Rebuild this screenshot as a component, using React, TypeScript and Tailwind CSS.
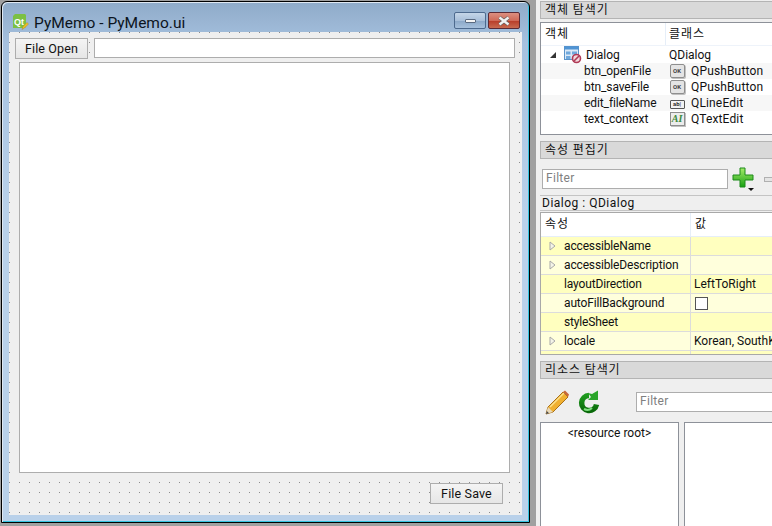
const font = "font-['Roboto','Noto_Sans_CJK_KR',sans-serif]";

function QtIcon() {
  return (
    <svg width="16" height="16" viewBox="0 0 16 16" className="mt-[2px] shrink-0">
      <path d="M2 0h10l1 1v12l-2 1H0V2z" fill="#7cc043" />
      <text x="1" y="10.500" fontSize="9" fontWeight="700" fill="#fff" fontFamily="Liberation Sans">Qt</text>
      <path d="M9 15.500l1-3 4-4 1.500 1.500-4 4z" fill="#f0c020" stroke="#a08020" strokeWidth="0.4" />
    </svg>
  );
}

function WindowButtons() {
  return (
    <div className="flex gap-[2px] mr-[9px]">
      <div className="w-[32px] h-[17px] rounded-[2px] border border-[#4d6a8e] bg-[linear-gradient(#c5d6e8,#a9c0da_50%,#8ba8c8_52%,#a6c0dc)] flex items-center justify-center">
        <div className="w-[11px] h-[4px] bg-[#f4f4f4] border border-[#5a6a80] rounded-[1px]" />
      </div>
      <div className="w-[32px] h-[17px] rounded-[2px] border border-[#5a2a36] bg-[linear-gradient(#dc8f80,#cf6a58_50%,#b83c28_52%,#c86a50)] flex items-center justify-center">
        <svg width="14" height="10" viewBox="0 0 14 10">
          <path d="M2.500 1.500l9 7M11.500 1.500l-9 7" stroke="#5f5f5f" strokeWidth="3.600" />
          <path d="M2.500 1.500l9 7M11.500 1.500l-9 7" stroke="#f2f2f2" strokeWidth="2.400" />
        </svg>
      </div>
    </div>
  );
}

function QtButton({ label }: { label: string }) {
  return (
    <button className="w-[73px] h-[21px] border border-[#adadad] bg-[linear-gradient(#f4f4f4,#e6e6e6)] text-[12.5px] leading-[20px] text-[#111] tracking-[0.15px]">
      {label}
    </button>
  );
}

function DesignerWindow() {
  return (
    <div className="w-[529px] h-[522px] ml-[1px] mt-[1px] border border-black rounded-t-[6px] bg-[linear-gradient(#8fabc9,#a6c1df_8%,#b9d1ea_40%)] shadow-[inset_1px_1px_0_#dfe8f2,inset_-1px_-1px_0_#35c4e0] flex flex-col">
      <div className="h-[30px] flex items-start justify-between pt-[10px] shrink-0">
        <div className="flex items-start gap-[5px] pl-[11px]">
          <QtIcon />
          <span className="text-[15.5px] leading-[22px] text-[#0c1420]">PyMemo - PyMemo.ui</span>
        </div>
        <WindowButtons />
      </div>
      <div className="w-[513px] h-[483px] ml-[7px] bg-[#efefef] bg-[radial-gradient(circle_at_0.5px_0.5px,#8c8c8c_0.6px,transparent_0.8px)] bg-[length:10px_10px] pt-[6px] flex flex-col">
        <div className="flex gap-[6px] pl-[6px]">
          <QtButton label="File Open" />
          <div className="w-[421px] h-[20px] bg-white border border-[#adadad]" />
        </div>
        <div className="w-[491px] h-[411px] ml-[10px] mt-[3px] bg-white border border-[#adadad]" />
        <div className="flex justify-end pr-[19px] mt-[10px]">
          <QtButton label="File Save" />
        </div>
      </div>
    </div>
  );
}

function PanelHeading({ title }: { title: string }) {
  return (
    <div className="h-[18px] bg-[#d9d9d9] border border-r-0 border-[#b4b4b4] pl-[4px] text-[12px] leading-[17px] text-[#111] tracking-[0.9px]">
      {title}
    </div>
  );
}

function DialogIcon() {
  return (
    <svg width="18" height="18" viewBox="0 0 18 18" className="shrink-0">
      <rect x="0.500" y="0.500" width="14" height="13" fill="#dbe9f7" stroke="#5b93c9" />
      <rect x="0.500" y="0.500" width="14" height="3" fill="#4f94d4" />
      <rect x="2" y="5.500" width="4.500" height="3" fill="#6fa8dc" />
      <rect x="8" y="5.500" width="5" height="3" fill="#6fa8dc" />
      <rect x="2" y="10" width="4.500" height="3" fill="#6fa8dc" />
      <circle cx="12.500" cy="12.500" r="4" fill="#f0d8dc" stroke="#b03a56" strokeWidth="1.600" />
      <path d="M10 15l5-5" stroke="#b03a56" strokeWidth="1.600" />
    </svg>
  );
}

function OkIcon() {
  return (
    <div className="w-[15px] h-[14px] bg-[#e4e4e4] border border-[#8e8e8e] rounded-[2px] shadow-[1px_1px_0_#c0c0c0] flex items-center justify-center text-[6px] leading-none font-bold text-[#444]">
      OK
    </div>
  );
}

function LineEditIcon() {
  return (
    <div className="w-[15px] h-[9px] mt-[2px] bg-[#f2f2f2] border border-[#555] rounded-[1px] flex items-center justify-center text-[6px] leading-none font-bold text-[#333]">
      ab|
    </div>
  );
}

function TextEditIcon() {
  return (
    <div className="w-[15px] h-[14px] bg-[#ececec] border border-[#8e8e8e] shadow-[1px_1px_0_#c0c0c0] flex items-center justify-center text-[10px] leading-none italic font-bold text-[#3c8a3c] font-['Liberation_Serif',serif]">
      AI
    </div>
  );
}

const objectRows = [
  { name: "btn_openFile", cls: "QPushButton", icon: <OkIcon />, tint: true },
  { name: "btn_saveFile", cls: "QPushButton", icon: <OkIcon />, tint: false },
  { name: "edit_fileName", cls: "QLineEdit", icon: <LineEditIcon />, tint: true },
  { name: "text_context", cls: "QTextEdit", icon: <TextEditIcon />, tint: false },
];

function ObjectInspector() {
  return (
    <div className="h-[113px] mt-[3px] bg-white border border-r-0 border-[#8d9199] text-[12px] text-[#111] overflow-hidden">
      <div className="h-[23px] flex leading-[22px] border-b border-[#eef3fa]">
        <div className="w-[125px] pl-[4px] border-r border-[#e6eef8] tracking-[1px]">객체</div>
        <div className="pl-[3px] tracking-[1px]">클래스</div>
      </div>
      <div className="h-[17px] flex items-center">
        <div className="w-[125px] flex items-center shrink-0">
          <span className="ml-[9px] w-0 h-0 border-l-[6px] border-l-transparent border-b-[6px] border-b-[#333]" />
          <span className="ml-[8px]"><DialogIcon /></span>
          <span className="ml-[4px]">Dialog</span>
        </div>
        <span className="ml-[3px]">QDialog</span>
      </div>
      {objectRows.map((row) => (
        <div key={row.name} className={`h-[16px] flex items-center ${row.tint ? "bg-[#f7f7f7]" : "bg-white"}`}>
          <div className="w-[125px] pl-[43px] shrink-0 whitespace-nowrap tracking-[-0.1px]">{row.name}</div>
          <div className="w-[16px] ml-[3px] flex justify-center shrink-0">{row.icon}</div>
          <span className="ml-[6px] tracking-[0.15px]">{row.cls}</span>
        </div>
      ))}
    </div>
  );
}

function FilterBox({ width }: { width: string }) {
  return (
    <div className={`${width} h-[20px] bg-white border border-[#adadad] pl-[3px] text-[12px] leading-[17px] text-[#808080] tracking-[0.3px] shrink-0`}>
      Filter
    </div>
  );
}

function PlusIcon() {
  return (
    <svg width="23" height="24" viewBox="0 0 23 24" className="shrink-0">
      <defs>
        <linearGradient id="plusFill" x1="0" y1="0" x2="0" y2="1">
          <stop offset="0" stopColor="#a5ec6a" />
          <stop offset="1" stopColor="#17a012" />
        </linearGradient>
      </defs>
      <path d="M8 1h5v7h8v5h-8v7H8v-7H1V8h7z" fill="url(#plusFill)" stroke="#1d8a1a" strokeWidth="1" />
      <path d="M16 21h6l-3 3z" fill="#111" />
    </svg>
  );
}

function ExpandArrow() {
  return (
    <svg width="7" height="10" viewBox="0 0 7 10" className="ml-[8px] shrink-0">
      <path d="M1 1l5 4-5 4z" fill="#f4f4e8" stroke="#a8a8a8" />
    </svg>
  );
}

const propertyRows = [
  { name: "accessibleName", expand: true, value: "" },
  { name: "accessibleDescription", expand: true, value: "" },
  { name: "layoutDirection", expand: false, value: "LeftToRight" },
  { name: "autoFillBackground", expand: false, value: "check" },
  { name: "styleSheet", expand: false, value: "" },
  { name: "locale", expand: true, value: "Korean, SouthKorea" },
];

function PropertyEditor() {
  return (
    <>
      <div className="flex items-center h-[24px] mt-[8px] ml-[2px] gap-[4px]">
        <FilterBox width="w-[186px]" />
        <PlusIcon />
        <div className="w-[14px] h-[5px] ml-[5px] bg-[#e4e4e4] border border-[#b0b0b0] shrink-0" />
      </div>
      <div className="h-[16px] mt-[4px] bg-[#efefef] border-y border-[#c4c4c4] pl-[2px] text-[12px] leading-[14px] text-[#111] tracking-[0.5px]">
        Dialog : QDialog
      </div>
      <div className="h-[143px] mt-[1px] bg-white border border-r-0 border-[#a8a8a8] text-[12px] text-[#111] overflow-hidden">
        <div className="h-[24px] flex leading-[23px] border-b border-[#e6eef8]">
          <div className="w-[150px] pl-[4px] border-r border-[#e6eef8] tracking-[1px]">속성</div>
          <div className="pl-[4px]">값</div>
        </div>
        {propertyRows.map((row, i) => (
          <div key={row.name} className={`h-[19px] flex leading-[18px] border-b border-[#dcdcdc] ${i % 2 === 0 ? "bg-[#ffffbf]" : "bg-[#ffffdc]"}`}>
            <div className="w-[150px] flex items-center border-r border-[#dcdcdc] shrink-0">
              {row.expand && <ExpandArrow />}
              <span className={`tracking-[-0.15px] ${row.expand ? "ml-[8px]" : "ml-[23px]"}`}>{row.name}</span>
            </div>
            <div className="pl-[3px] flex items-center whitespace-nowrap">
              {row.value === "check" ? (
                <span className="ml-[1px] w-[13px] h-[13px] bg-white border border-[#555] block" />
              ) : (
                row.value
              )}
            </div>
          </div>
        ))}
        <div className="h-[4px] bg-[#ffffbf] flex">
          <div className="w-[150px] border-r border-[#dcdcdc]" />
        </div>
      </div>
    </>
  );
}

function PencilIcon() {
  return (
    <svg width="25" height="25" viewBox="0 0 25 25" className="shrink-0">
      <path d="M1 24l2-7L18 2l5 5L8 22z" fill="#f0b030" stroke="#a87018" strokeWidth="1" />
      <path d="M5 17L19 3" stroke="#fbe08a" strokeWidth="1.500" />
      <path d="M18 2l2-1.500 4 4-1 2.500z" fill="#c8683a" />
      <path d="M1 24l2-7 5 5z" fill="#e8d8b8" />
      <path d="M1 24l.8-3 2.200 2.200z" fill="#444" />
    </svg>
  );
}

function RefreshIcon() {
  return (
    <svg width="24" height="24" viewBox="0 0 24 24" className="shrink-0">
      <defs>
        <linearGradient id="refreshFill" x1="0" y1="0" x2="0" y2="1">
          <stop offset="0" stopColor="#1d9a1d" />
          <stop offset="1" stopColor="#0a6a0a" />
        </linearGradient>
      </defs>
      <path d="M13 5.500a7.500 7.500 0 1 0 7.500 9" fill="none" stroke="url(#refreshFill)" strokeWidth="5.500" />
      <path d="M12 3l4 1 6-3.500V10H12l3-3z" fill="#2aa52a" />
      <path d="M8 19a7 7 0 0 0 8-1" stroke="#7fe07f" strokeWidth="2" fill="none" />
    </svg>
  );
}

function ResourceBrowser() {
  return (
    <>
      <div className="flex items-center h-[26px] mt-[10px] ml-[5px]">
        <PencilIcon />
        <span className="ml-[6px]"><RefreshIcon /></span>
        <div className="ml-[36px] w-[200px]"><FilterBox width="w-[200px]" /></div>
      </div>
      <div className="flex gap-[5px] mt-[7px] h-[110px]">
        <div className="w-[139px] h-full shrink-0 bg-white border border-b-0 border-[#8d9199] text-center text-[12px] leading-[21px] text-[#111]">
          &lt;resource root&gt;
        </div>
        <div className="flex-1 h-full bg-white border border-b-0 border-r-0 border-[#8d9199]" />
      </div>
    </>
  );
}

export default function App() {
  return (
    <div className={`w-[772px] h-[526px] bg-[#a0a0a0] flex overflow-hidden ${font}`}>
      <div className="w-[536px] shrink-0">
        <DesignerWindow />
      </div>
      <div className="flex-1 min-w-0 h-full bg-[#efefef] pt-[1px] pl-[4px] overflow-hidden">
        <PanelHeading title="객체 탐색기" />
        <ObjectInspector />
        <div className="h-[6px]" />
        <PanelHeading title="속성 편집기" />
        <PropertyEditor />
        <div className="h-[6px]" />
        <PanelHeading title="리소스 탐색기" />
        <ResourceBrowser />
      </div>
    </div>
  );
}
